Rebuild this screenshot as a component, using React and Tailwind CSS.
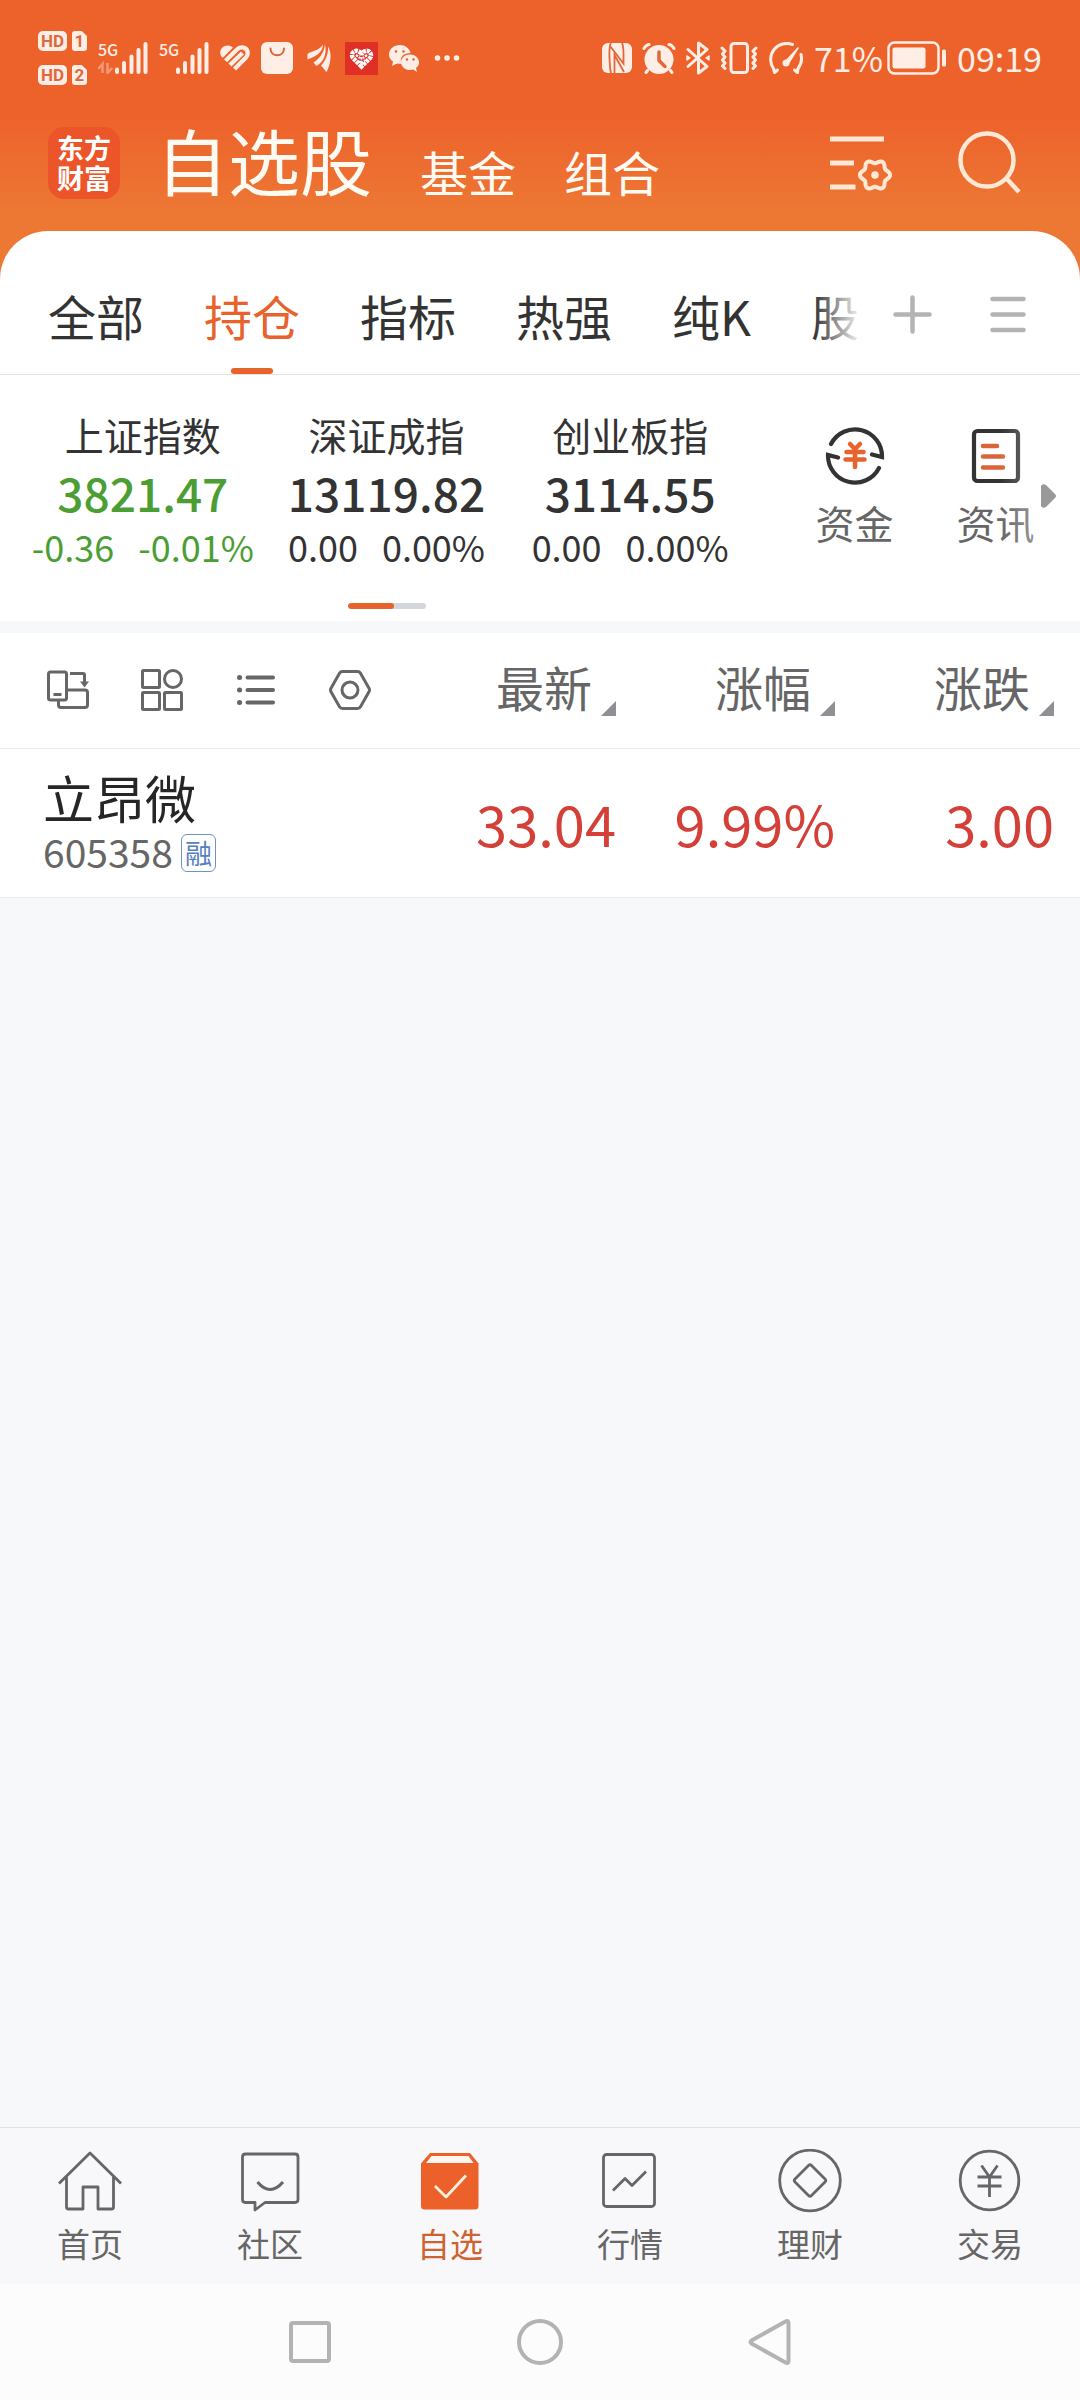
import { useState } from 'react';
import clsx from 'clsx';

const groupTabs = ['全部', '持仓', '指标', '热强', '纯K', '股'];

const indices = [
  { name: '上证指数', value: '3821.47', change: '-0.36', percent: '-0.01%', down: true },
  { name: '深证成指', value: '13119.82', change: '0.00', percent: '0.00%', down: false },
  { name: '创业板指', value: '3114.55', change: '0.00', percent: '0.00%', down: false }
];

const stocks = [
  { name: '立昂微', code: '605358', tag: '融', price: '33.04', percent: '9.99%', change: '3.00' }
];

const columns = ['最新', '涨幅', '涨跌'];

// six-lobed gear outline around (45, 40)
const gearPoints = Array.from({ length: 90 }, (_, i) => {
  const angle = (i / 90) * Math.PI * 2;
  const radius = 13.4 + 1.7 * Math.cos(6 * angle);
  return `${(45 + radius * Math.cos(angle)).toFixed(2)},${(40 + radius * Math.sin(angle)).toFixed(2)}`;
}).join(' ');

function SimBadge({ number }) {
  return (
    <div className="flex gap-[5px] font-[Roboto,sans-serif] text-[17px] leading-5 font-bold text-[#dd6a3c]">
      <span className="w-[29px] rounded-[5px] bg-[#ffeee6] text-center">HD</span>
      <span className="w-[15px] rounded-[3px] bg-[#ffeee6] text-center [clip-path:polygon(0_0,65%_0,100%_25%,100%_100%,0_100%)]">
        {number}
      </span>
    </div>
  );
}

function Signal({ data }) {
  return (
    <div className="relative h-8 w-[50px]">
      <span className="absolute left-0 top-0 font-['Liberation_Sans_Narrow','Noto_Sans_CJK_SC',sans-serif] text-[16px] leading-[14px] font-medium">
        5G
      </span>
      <svg viewBox="0 0 50 32" className="h-8 w-[50px]" fill="none" stroke="currentColor">
        {data && <path d="M4.500 31V22L0 27M9.500 21v10l4.500-5" strokeWidth="2.500" opacity=".4" />}
        <path d="M19 27.500v2.500M26 21v9M33.500 14.500v15.500M40.500 8v22M47.500 2v28" strokeWidth="4" strokeLinecap="round" />
      </svg>
    </div>
  );
}

function StatusBar() {
  return (
    <div className="flex h-[116px] items-center justify-between pl-[38px] pr-[38px] text-[#ffeee6]">
      <div className="flex items-center gap-[11px]">
        <div className="flex flex-col gap-[14px]">
          <SimBadge number="1" />
          <SimBadge number="2" />
        </div>
        <Signal data />
        <Signal />
        <svg viewBox="0 0 30 26" className="h-[26px] w-[30px]" fill="none" stroke="currentColor" strokeWidth="4.300">
          <path d="M2.800 12.800C-2 9 0 .5 8 .5c2 0 4 1 4.800 2.200Z" fill="currentColor" stroke="none" />
          <path d="M5.500 15.800 17 4.500C20.500 1 27.500 2 27.700 8c0 2-.7 3.500-1.700 4.500L14.500 24" />
          <path d="m10 20 12.500-12" />
        </svg>
        <svg viewBox="0 0 32 32" className="size-8">
          <rect width="32" height="32" rx="6" fill="currentColor" />
          <path d="M9.500 6.500c0 9 13.500 9 13.500 0" fill="none" stroke="#d9653a" strokeWidth="2" strokeLinecap="round" />
        </svg>
        <svg viewBox="0 0 30 28" className="h-7 w-[30px]" fill="currentColor">
          <path d="M3.500 15.500V10C8 6 14 8 19 .5 18.500 9 12 12 3.500 15.500Z" />
          <path d="M9.500 18.500C15 15 20 9 21 .500 23.500 11 18.500 18.500 12.500 22Z" />
          <path d="M17 21.500C22 16 24.500 10 24 2.500 28.500 9 26.500 21 22.500 28Z" />
        </svg>
        <svg viewBox="0 0 33 33" className="size-[33px]">
          <rect width="33" height="33" fill="#e02f24" />
          <path
            d="M16.500 24.500 8 16c-3-4 1-8 4.500-7 2.500.5 3.500 2 4 4 .5-2 1.500-3.500 4-4 3.500-1 7.500 3 4.500 7Z"
            fill="none"
            stroke="#fff"
            strokeWidth="4.500"
            strokeDasharray="3.200 .8"
          />
          <path d="m11 13 4 3m7-3-4 3m-4 3 2.500 2.500L20 18m-3.500-3v8" stroke="#fff" strokeWidth="2.200" strokeDasharray="2.500 1" />
        </svg>
        <svg viewBox="0 0 30 27" className="h-[27px] w-[30px]">
          <path d="M11 0C5 0 0 4 0 9.500c0 3 1.500 5.500 4 7L3 21l5-2.500c1.500.3 3 .3 4.500 0C10 12 15 8 21.500 8 20.500 3.500 16 0 11 0Z" fill="currentColor" />
          <path d="M21 9.500c-5 0-9 3.500-9 7.700 0 4.300 4 7.800 9 7.800 1.200 0 2.300-.2 3.300-.5L28 27l-1-4c2-1.500 3-3.500 3-5.800 0-4.200-4-7.700-9-7.700Z" fill="currentColor" />
          <g fill="#d9653a">
            <circle cx="7" cy="6.500" r="1.300" />
            <circle cx="14.500" cy="6.500" r="1.300" />
            <circle cx="18" cy="14.500" r="1.200" />
            <circle cx="24.500" cy="14.500" r="1.200" />
          </g>
        </svg>
        <svg viewBox="0 0 34 8" className="h-2 w-[34px]" fill="currentColor">
          <circle cx="7.500" cy="4" r="2.800" />
          <circle cx="17" cy="4" r="2.800" />
          <circle cx="26.500" cy="4" r="2.800" />
        </svg>
      </div>

      <div className="flex items-center gap-[10px]">
        <svg viewBox="0 0 30 30" className="size-[30px]">
          <rect width="30" height="30" rx="6" fill="currentColor" />
          <path
            d="M9 0Q7 3 7.500 15T9 30M8 3l13.500 17.500V11Q21.500 3 20 0M12.500 30V12L22 29"
            fill="none"
            stroke="#e0673a"
            strokeWidth="1.800"
          />
        </svg>
        <svg viewBox="0 0 34 32" className="h-8 w-[34px]" fill="none" stroke="currentColor" strokeWidth="3" strokeLinecap="round">
          <circle cx="17" cy="17.500" r="14.500" fill="currentColor" stroke="none" />
          <path d="M2 6.500Q4 3 7 2.500M32 6.500Q30 3 27 2.500M5.500 28.500l-1.500 2M28.500 28.500l1.500 2" />
          <path d="M17 10v8.500l6 6" stroke="#e2683b" strokeWidth="3.500" />
        </svg>
        <svg viewBox="0 0 24 34" className="h-[34px] w-6" fill="none" stroke="currentColor" strokeWidth="3" strokeLinejoin="round" strokeLinecap="round">
          <path d="m2 8.500 19 17L12.500 32V2L21 8.500l-19 17" />
          <path d="M1 15v4l3-2ZM23 15v4l-3-2Z" strokeWidth="1.500" fill="currentColor" />
        </svg>
        <svg viewBox="0 0 38 32" className="h-8 w-[38px]" fill="none" stroke="currentColor" strokeWidth="3" strokeLinejoin="round" strokeLinecap="round">
          <rect x="11" y="1.500" width="16.500" height="29" rx="3" />
          <path d="m2 6 3 3-2.500 3L5 15l-2.500 3L5 21l-2.500 3L5 26.500M36 6l-3 3 2.500 3-2.500 3 2.500 3-2.500 3 2.500 3-2.500 2.500" strokeWidth="3" />
        </svg>
        <svg viewBox="0 0 36 32" className="h-8 w-9" fill="none" stroke="currentColor" strokeWidth="3" strokeLinecap="round" strokeLinejoin="round">
          <path d="m9.500 28-3 2.500-1-4A16 16 0 0 1 24.500 2.500M33 12.500a16 16 0 0 1-3 14l-.5 4L26.500 28" />
          <circle cx="18" cy="21" r="3.500" fill="currentColor" stroke="none" />
          <path d="m30 6-13 14 3 2Z" fill="currentColor" strokeWidth="1.500" />
        </svg>
        <div className="flex items-center gap-1">
          <span className="text-[34px] leading-10">71%</span>
          <svg viewBox="0 0 60 34" className="h-[34px] w-[60px]">
            <rect x="1.500" y="1.500" width="50" height="31" rx="6" fill="none" stroke="currentColor" strokeWidth="2.500" />
            <rect x="5.500" y="6.500" width="33" height="21" rx="2" fill="currentColor" />
            <rect x="55" y="8.500" width="4" height="17" rx="1.500" fill="currentColor" />
          </svg>
        </div>
        <time className="text-[34px] leading-10">09:19</time>
      </div>
    </div>
  );
}

function Header() {
  return (
    <header className="bg-[linear-gradient(#ed622b_116px,#ed7834_215px)] pb-[69px]">
      <StatusBar />
      <div className="flex h-[94px] items-center pl-12 pr-[58px]">
        <div className="flex size-[72px] flex-col justify-center rounded-2xl bg-[#ec542a] text-center text-[27px] leading-[30px] font-bold text-white">
          <span>东方</span>
          <span>财富</span>
        </div>
        <nav className="ml-9 flex items-end gap-12 pb-2 text-5xl leading-none text-[#fffaf2]">
          <button type="button" className="text-7xl leading-none">自选股</button>
          <button type="button" className="leading-none">基金</button>
          <button type="button" className="leading-none">组合</button>
        </nav>
        <div className="ml-auto flex items-center gap-16 text-[#ffe8d6]">
          <button type="button" aria-label="设置">
            <svg viewBox="0 0 64 56" className="h-14 w-16" fill="none" stroke="currentColor" strokeWidth="5">
              <path d="M0 4h54M0 28h24M0 52h25.500" />
              <polygon points={gearPoints} strokeWidth="4" strokeLinejoin="round" />
              <circle cx="45" cy="40" r="3.800" fill="currentColor" stroke="none" />
            </svg>
          </button>
          <button type="button" aria-label="搜索">
            <svg viewBox="0 0 64 64" className="size-16" fill="none" stroke="currentColor" strokeWidth="4.500">
              <circle cx="29" cy="29" r="26.500" />
              <path d="m48 47 13 14" />
            </svg>
          </button>
        </div>
      </div>
    </header>
  );
}

function GroupTabs({ active, onChange }) {
  return (
    <div className="flex h-36 border-b border-[#e4e4e4] pt-6">
      <div className="relative min-w-0 flex-1 overflow-hidden">
        <div role="tablist" className="flex h-full gap-[60px] pl-12">
          {groupTabs.map((tab) => (
            <button
              key={tab}
              type="button"
              role="tab"
              aria-selected={tab === active}
              onClick={() => onChange(tab)}
              className={clsx('relative h-full shrink-0 text-5xl', tab === active ? 'text-[#e8632c]' : 'text-[#333]')}
            >
              {tab}
              {tab === active && (
                <span className="absolute bottom-0 left-1/2 h-1.5 w-[42px] -translate-x-1/2 rounded-full bg-[#e8632c]" />
              )}
            </button>
          ))}
        </div>
        <div className="pointer-events-none absolute inset-y-0 right-0 w-12 bg-linear-to-r from-white/0 to-white" />
      </div>
      <div className="flex shrink-0 items-center gap-[58px] pl-[31px] pr-[54px] text-[#b3b3b3]">
        <button type="button" aria-label="添加分组">
          <svg viewBox="0 0 39 39" className="size-[39px]" stroke="currentColor" strokeWidth="4.500" strokeLinecap="round">
            <path d="M2.500 19.500h34M19.500 2.500v34" />
          </svg>
        </button>
        <button type="button" aria-label="分组管理">
          <svg viewBox="0 0 36 39" className="h-[39px] w-9" stroke="currentColor" strokeWidth="4.500" strokeLinecap="round">
            <path d="M2.500 4h31M2.500 19.500h31M2.500 35h31" />
          </svg>
        </button>
      </div>
    </div>
  );
}

function IndexStrip() {
  return (
    <section className="relative flex pb-3">
      <div className="flex-1 pl-[21px] pr-8 pt-[35px]">
        <div className="grid grid-cols-3 text-center text-[#333]">
          {indices.map((item) => (
            <div key={item.name} className="whitespace-nowrap">
              <div className="text-[39px] leading-[48px]">{item.name}</div>
              <div className={clsx('mt-1 text-[46px] leading-[60px] font-medium', item.down && 'text-[#4b9e33]')}>
                {item.value}
              </div>
              <div className={clsx('flex justify-center gap-6 text-4xl leading-[48px]', item.down && 'text-[#4b9e33]')}>
                <span>{item.change}</span>
                <span>{item.percent}</span>
              </div>
            </div>
          ))}
        </div>
        <div className="mx-auto mt-[33px] h-1.5 w-[78px] overflow-hidden rounded-full bg-[#d3d6db]">
          <div className="h-full w-3/5 rounded-full bg-[#e8632c]" />
        </div>
      </div>
      <div className="flex items-start pr-[14px] pt-[51px] text-[39px] leading-[48px] text-[#666]">
        <button type="button" className="flex w-[141px] flex-col items-center gap-3">
          <svg viewBox="0 0 60 60" className="size-[60px]" fill="none" strokeLinecap="round">
            <g stroke="#333" strokeWidth="4.200">
              <path d="M6 18A27 27 0 0 1 57 31L47 28.500" />
              <path d="M54 42A27 27 0 0 1 3 29L13 31.500" />
            </g>
            <path d="m25 18 5 5 5-5M21.500 26h17M20.500 33.500h19M30 24v17" stroke="#e8632c" strokeWidth="4.500" />
          </svg>
          资金
        </button>
        <button type="button" className="flex w-[141px] flex-col items-center gap-3">
          <svg viewBox="0 0 60 60" className="size-[60px]" fill="none" strokeLinecap="round">
            <rect x="8" y="5" width="44" height="50" rx="3.500" stroke="#333" strokeWidth="4.200" />
            <path d="M17 20h14M17 30.500h20M17 41.500h20" stroke="#d9663a" strokeWidth="4.500" />
          </svg>
          资讯
        </button>
      </div>
      <div className="pointer-events-none absolute inset-y-0 right-6 w-14 bg-linear-to-r from-white/0 to-white/50" />
      <button type="button" aria-label="更多" className="absolute right-6 top-[108px]">
        <svg viewBox="0 0 15 26" className="h-[26px] w-[15px]" fill="#999">
          <path d="M0 3q1-3 5-1l9 9q2 2 0 4l-9 9q-4 2-5-1Z" />
        </svg>
      </button>
    </section>
  );
}

function ListTools() {
  return (
    <div className="flex items-center gap-[52px] pl-[47px] text-[#666]">
      <button type="button" aria-label="横屏">
        <svg viewBox="0 0 42 42" className="size-[42px]" fill="none" stroke="currentColor" strokeWidth="3">
          <rect x="1.500" y="3" width="18" height="28" rx="2" />
          <path d="M6.500 25.500h8M23 4.500h13q1.500 0 1.500 1.500v9M20 21h18q2.500 0 2.500 2.500V36q0 2.500-2.500 2.500H14q-2.500 0-2.500-2.500v-5" />
          <path d="M33 12.500h9l-4.500 6Z" fill="currentColor" stroke="none" />
        </svg>
      </button>
      <button type="button" aria-label="宫格">
        <svg viewBox="0 0 42 42" className="size-[42px]" fill="none" stroke="currentColor" strokeWidth="3">
          <rect x="1.500" y="1.500" width="17" height="17" rx="1" />
          <rect x="1.500" y="23.500" width="17" height="17" rx="1" />
          <rect x="23.500" y="23.500" width="17" height="17" rx="1" />
          <circle cx="32" cy="10" r="8.500" />
        </svg>
      </button>
      <button type="button" aria-label="列表">
        <svg viewBox="0 0 42 42" className="size-[42px]" fill="none" stroke="currentColor" strokeWidth="4" strokeLinecap="round">
          <path d="M12.500 8.500h25.500M12.500 21h25.500M12.500 33.500h25.500" />
          <path d="M4.500 8.500h.1M4.500 21h.1M4.500 33.500h.1" strokeWidth="5" />
        </svg>
      </button>
      <button type="button" aria-label="列表设置">
        <svg viewBox="0 0 42 42" className="size-[42px]" fill="none" stroke="currentColor" strokeWidth="3" strokeLinejoin="round">
          <path d="M13.500 2.500h15q2 0 3 1.700l8.500 15q1 1.800 0 3.600l-8.500 15q-1 1.700-3 1.700h-15q-2 0-3-1.700l-8.500-15q-1-1.800 0-3.600l8.500-15q1-1.700 3-1.700Z" />
          <circle cx="21" cy="21" r="8" />
        </svg>
      </button>
    </div>
  );
}

function StockTable() {
  return (
    <table className="w-full table-fixed border-collapse bg-white">
      <colgroup>
        <col />
        <col className="w-[219px]" />
        <col className="w-[219px]" />
        <col className="w-[245px]" />
      </colgroup>
      <thead>
        <tr className="h-[115px] border-b border-[#ebebeb]">
          <th className="p-0 font-normal">
            <ListTools />
          </th>
          {columns.map((label) => (
            <th key={label} scope="col" className="p-0 font-normal last:pr-[26px]">
              <button type="button" className="ml-auto flex items-end gap-[9px] pb-2 text-5xl leading-[60px] text-[#666]">
                {label}
                <svg viewBox="0 0 15 15" className="size-[15px]" fill="#8f8f94">
                  <path d="M15 0v15H0Z" />
                </svg>
              </button>
            </th>
          ))}
        </tr>
      </thead>
      <tbody>
        {stocks.map((stock) => (
          <tr key={stock.code} className="h-[149px] border-b border-[#ebecee] text-right text-[56px] leading-[60px] text-[#d43f37]">
            <td className="p-0 pb-1 pl-[43px] text-left">
              <div className="text-[51px] leading-[60px] text-[#262626]">{stock.name}</div>
              <div className="flex items-center gap-2 text-[39px] leading-[48px] text-[#666]">
                {stock.code}
                <span className="mt-1 rounded-md border border-[#6f94c4] px-[3px] text-[27px] leading-9 text-[#5580bd]">
                  {stock.tag}
                </span>
              </div>
            </td>
            <td className="p-0">{stock.price}</td>
            <td className="p-0">{stock.percent}</td>
            <td className="p-0 pr-[26px]">{stock.change}</td>
          </tr>
        ))}
      </tbody>
    </table>
  );
}

const navItems = [
  {
    label: '首页',
    icon: (
      <path d="M1 34.500 32 4l31 30.500M8.500 28v30q0 2 2 2H25V38h15v22h13.500q2 0 2-2V28" />
    )
  },
  {
    label: '社区',
    icon: (
      <>
        <path d="M7 5h50q3 0 3 3v42.500q0 3-3 3H27L17 61v-7.500H7.500q-3 0-3-3V8q0-3 3-3Z" />
        <path d="M19.500 33q12.500 15 25.500 0" strokeWidth="3" />
      </>
    )
  },
  {
    label: '自选',
    icon: (
      <>
        <path d="M3 14.500 12 4h40l8.500 10.500V57q0 3.500-3.500 3.500H6.500Q3 60.500 3 57Z" fill="#eb6129" stroke="none" />
        <path d="M13.500 7h37l5 7H8Z" fill="#fff6ef" stroke="none" />
        <path d="m17 37 11 11 20-21.500" stroke="#fff0e4" />
      </>
    )
  },
  {
    label: '行情',
    icon: (
      <>
        <rect x="5.500" y="5.500" width="51" height="52" rx="3" />
        <path d="m15 41.500 12-12 7 7 14-14" />
      </>
    )
  },
  {
    label: '理财',
    icon: (
      <>
        <circle cx="32" cy="31.500" r="30.300" />
        <path d="M30.500 16.500q1.500-1.500 3 0L47 30q1.500 1.500 0 3L33.500 46.500q-1.500 1.500-3 0L17 33q-1.500-1.500 0-3Z" />
      </>
    )
  },
  {
    label: '交易',
    icon: (
      <>
        <circle cx="31.500" cy="31.500" r="29.300" />
        <path d="m23.500 16.500 8 11.500 8-11.500M19.500 28h24M19.500 37h24M31.500 28v20" />
      </>
    )
  }
];

function BottomNav() {
  return (
    <nav className="grid grid-cols-6 border-t border-[#e2e3e5] bg-[#f8f8fa] py-[21px]">
      {navItems.map((item) => (
        <a
          key={item.label}
          href="#"
          className={clsx(
            'flex flex-col items-center gap-2.5 text-[33px] leading-10',
            item.label === '自选' ? 'text-[#cf6231]' : 'text-[#666]'
          )}
        >
          <svg viewBox="0 0 64 64" className="size-16" fill="none" stroke="currentColor" strokeWidth="2.800" strokeLinejoin="round">
            {item.icon}
          </svg>
          {item.label}
        </a>
      ))}
    </nav>
  );
}

function SystemNav() {
  return (
    <div className="flex h-[116px] items-center justify-center gap-[184px] bg-[#fcfcfc] text-[#b3b3b3]">
      <button type="button" aria-label="最近任务">
        <svg viewBox="0 0 46 46" className="size-[46px]" fill="none" stroke="currentColor" strokeWidth="4">
          <rect x="4" y="4" width="38" height="38" rx="2" />
        </svg>
      </button>
      <button type="button" aria-label="主屏幕">
        <svg viewBox="0 0 46 46" className="size-[46px]" fill="none" stroke="currentColor" strokeWidth="4">
          <circle cx="23" cy="23" r="21" />
        </svg>
      </button>
      <button type="button" aria-label="返回">
        <svg viewBox="0 0 46 46" className="size-[46px]" fill="none" stroke="currentColor" strokeWidth="4" strokeLinejoin="round">
          <path d="M38.500 2.500q3-1.500 3 1.500v38q0 3-3 1.500L4.500 24.500q-2-1.500 0-3Z" />
        </svg>
      </button>
    </div>
  );
}

export default function App() {
  const [activeTab, setActiveTab] = useState('持仓');

  return (
    <div className="flex min-h-screen flex-col bg-[#f7f8fa] font-['Noto_Sans_CJK_SC',sans-serif]">
      <Header />
      <main className="relative -mt-12 flex flex-1 flex-col">
        <div className="rounded-t-[48px] bg-white">
          <GroupTabs active={activeTab} onChange={setActiveTab} />
          <IndexStrip />
        </div>
        <div className="mt-3">
          <StockTable />
        </div>
      </main>
      <BottomNav />
      <SystemNav />
    </div>
  );
}
